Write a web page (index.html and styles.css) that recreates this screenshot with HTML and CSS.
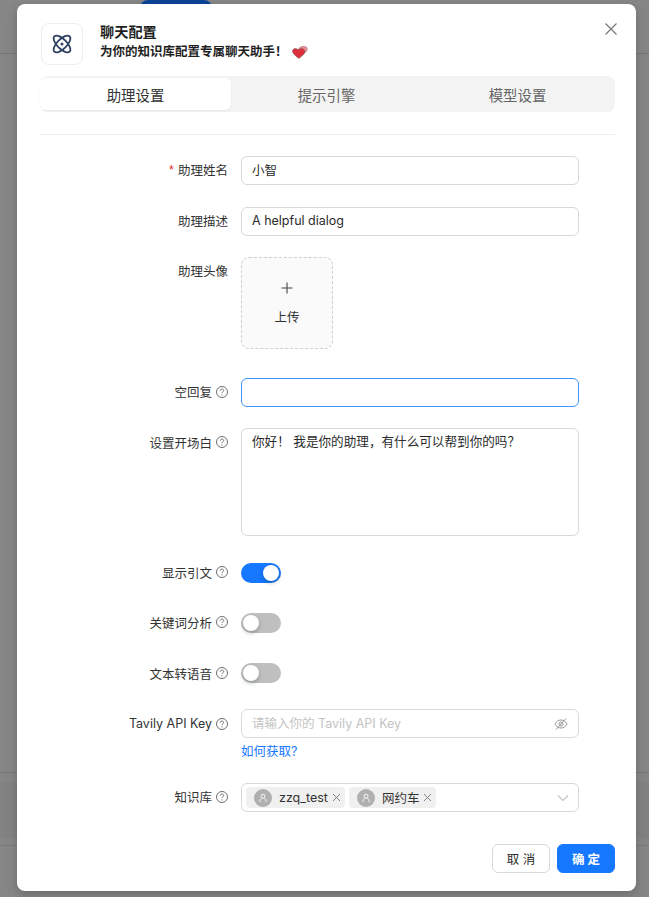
FILE: index.html
```html
<!DOCTYPE html>
<html lang="zh">
<head>
<meta charset="utf-8">
<title>聊天配置</title>
<link rel="stylesheet" href="styles.css">
</head>
<body>
<div class="backdrop">
  <div class="bg-pill"></div>
  <div class="bg-line bg-line-a"></div>
  <div class="bg-line bg-line-b"></div>
  <div class="bg-band"></div>
  <div class="bg-line bg-line-c"></div>
</div>
<main class="modal">
  <button class="close" aria-label="关闭">
    <svg width="14" height="14" viewBox="0 0 14 14"><path d="M1.5 1.5l11 11M12.5 1.5l-11 11" stroke="#777" stroke-width="1.2" fill="none"/></svg>
  </button>
  <header class="head">
    <div class="logo">
      <svg width="22" height="22" viewBox="0 0 22 22" fill="none" stroke="#2f4160" stroke-width="1.8">
        <ellipse cx="11" cy="11" rx="10.800" ry="4.800" transform="rotate(45 11 11)"/>
        <ellipse cx="11" cy="11" rx="10.800" ry="4.800" transform="rotate(-45 11 11)"/>
        <circle cx="11" cy="11" r="1.500" fill="#2f4160" stroke="none"/>
      </svg>
    </div>
    <div class="head-text">
      <div class="title">聊天配置</div>
      <div class="subtitle">为你的知识库配置专属聊天助手！
        <svg class="hearts" width="16" height="13" viewBox="0 0 16 13">
          <path d="M6.500 3C7.500 1 10 .2 12.800.4c2.300.2 3.100 2.300 2 4.300-.9 1.600-3 3.200-5.300 4.300z" fill="#ec8c96" stroke="#8a6a6e" stroke-width=".5"/>
          <path d="M5.600 3.300C4 2 1.300 2.300.6 4.400c-.6 2 1.500 4.600 6.300 8 2.800-2 5.600-4.300 5.900-6.600.3-2.400-2.600-3.900-4.600-2.900-1.100.5-1.500.9-2.600.4z" fill="#dd2f3c" stroke="#6d5557" stroke-width=".5"/>
        </svg>
      </div>
    </div>
  </header>

  <nav class="tabs">
    <div class="tab tab-active">助理设置</div>
    <div class="tab">提示引擎</div>
    <div class="tab">模型设置</div>
  </nav>
  <hr class="divider">

  <form class="form">
    <div class="row row-name">
      <label class="label"><span class="req">*</span>助理姓名</label>
      <div class="field"><div class="input">小智</div></div>
    </div>
    <div class="row row-desc">
      <label class="label">助理描述</label>
      <div class="field"><div class="input">A helpful dialog</div></div>
    </div>
    <div class="row row-avatar">
      <label class="label">助理头像</label>
      <div class="field">
        <div class="upload">
          <svg width="12" height="12" viewBox="0 0 12 12"><path d="M6 .5v11M.5 6h11" stroke="#444" stroke-width="1.100" fill="none"/></svg>
          <span class="upload-text">上传</span>
        </div>
      </div>
    </div>
    <div class="row row-empty">
      <label class="label">空回复<svg class="help" viewBox="0 0 12 12"><use href="#q"/></svg></label>
      <div class="field"><div class="input input-focus"></div></div>
    </div>
    <div class="row row-open">
      <label class="label">设置开场白<svg class="help" viewBox="0 0 12 12"><use href="#q"/></svg></label>
      <div class="field"><div class="textarea">你好！ 我是你的助理，有什么可以帮到你的吗？</div></div>
    </div>
    <div class="row row-switch row-quote">
      <label class="label">显示引文<svg class="help" viewBox="0 0 12 12"><use href="#q"/></svg></label>
      <div class="field"><div class="switch switch-on"><span class="thumb"></span></div></div>
    </div>
    <div class="row row-switch row-keyword">
      <label class="label">关键词分析<svg class="help" viewBox="0 0 12 12"><use href="#q"/></svg></label>
      <div class="field"><div class="switch"><span class="thumb"></span></div></div>
    </div>
    <div class="row row-switch row-tts">
      <label class="label">文本转语音<svg class="help" viewBox="0 0 12 12"><use href="#q"/></svg></label>
      <div class="field"><div class="switch"><span class="thumb"></span></div></div>
    </div>
    <div class="row row-key">
      <label class="label">Tavily API Key<svg class="help" viewBox="0 0 12 12"><use href="#q"/></svg></label>
      <div class="field">
        <div class="input input-icon">
          <span class="placeholder">请输入你的 Tavily API Key</span>
          <svg width="14" height="14" viewBox="0 0 14 14" fill="none" stroke="#999" stroke-width="1">
            <path d="M1 7c1.500-2.700 3.500-4 6-4s4.500 1.300 6 4c-1.500 2.700-3.500 4-6 4s-4.500-1.300-6-4z"/>
            <circle cx="7" cy="7" r="2"/>
            <path d="M12 1.500L2 12.500"/>
          </svg>
        </div>
        <a class="link" href="#">如何获取?</a>
      </div>
    </div>
    <div class="row row-kb">
      <label class="label">知识库<svg class="help" viewBox="0 0 12 12"><use href="#q"/></svg></label>
      <div class="field">
        <div class="select">
          <span class="tag">
            <span class="avatar"><svg width="10" height="10" viewBox="0 0 10 10"><use href="#u"/></svg></span>
            <span class="tag-text">zzq_test</span>
            <svg class="tag-x" viewBox="0 0 9 9"><use href="#x"/></svg>
          </span>
          <span class="tag">
            <span class="avatar"><svg width="10" height="10" viewBox="0 0 10 10"><use href="#u"/></svg></span>
            <span class="tag-text">网约车</span>
            <svg class="tag-x" viewBox="0 0 9 9"><use href="#x"/></svg>
          </span>
          <svg class="chevron" width="12" height="12" viewBox="0 0 12 12"><path d="M1 3.500l5 5 5-5" stroke="#c4c4c4" stroke-width="1.100" fill="none"/></svg>
        </div>
      </div>
    </div>
  </form>

  <footer class="foot">
    <button class="btn" type="button">取 消</button>
    <button class="btn btn-primary" type="button">确 定</button>
  </footer>
</main>

<svg class="defs" width="0" height="0">
  <defs>
    <g id="q" fill="none" stroke="#6f6f6f">
      <circle cx="6" cy="6" r="5.500" stroke-width="1"/>
      <path d="M4.300 4.700c0-1 .8-1.600 1.700-1.600s1.700.6 1.700 1.500c0 1.300-1.700 1.200-1.700 2.500" stroke-width="1"/>
      <circle cx="6" cy="8.800" r=".65" fill="#6f6f6f" stroke="none"/>
    </g>
    <g id="u" fill="none" stroke="#fff" stroke-width=".9">
      <circle cx="5" cy="3.300" r="2"/>
      <path d="M2 9V7.500C2 6.500 3 6 3.700 5.500M8 9V7.500C8 6.500 7 6 6.300 5.500"/>
    </g>
    <path id="x" d="M1 1l7 7M8 1L1 8" stroke="#777" stroke-width=".9" fill="none"/>
  </defs>
</svg>
</body>
</html>
```
FILE: styles.css
```css
* { box-sizing: border-box; }
html, body { margin: 0; padding: 0; height: 100%; }
body {
  background: #868686;
  font-family: Inter, "Noto Sans CJK SC", sans-serif;
  font-size: 12.5px;
  color: #2b2b2b;
  overflow: hidden;
}
.backdrop { position: absolute; inset: 0; overflow: hidden; }
.bg-pill { position: absolute; left: 140px; top: 0; width: 72px; height: 20px; background: #0e4496; border-radius: 8px 8px 0 0; }
.bg-line { position: absolute; left: 0; right: 0; height: 1px; background: #767676; }
.bg-line-a { top: 53px; }
.bg-line-b { top: 772px; }
.bg-line-c { top: 845px; background: #7a7a7a; }
.bg-band { position: absolute; left: 0; right: 0; top: 782px; height: 56px; background: #828282; }

.modal {
  position: absolute;
  left: 17px;
  top: 4px;
  width: 619px;
  height: 887px;
  background: #fff;
  border-radius: 8px;
  padding: 19px 21px 18px 23px;
  display: flex;
  flex-direction: column;
  box-shadow: 0 6px 16px rgba(0,0,0,.08), 0 3px 6px rgba(0,0,0,.12);
}
.close { position: absolute; right: 18px; top: 18px; width: 14px; height: 14px; padding: 0; border: 0; background: none; display: flex; }

.head { display: flex; align-items: center; height: 42px; padding-left: 1px; gap: 17px; }
.logo { width: 42px; height: 42px; border: 1px solid #eceef2; border-radius: 8px; display: flex; align-items: center; justify-content: center; }
.head-text { display: flex; flex-direction: column; margin-top: -4px; }
.title { font-size: 14.2px; font-weight: 700; line-height: 20px; color: #1f1f1f; }
.subtitle { font-size: 12.5px; font-weight: 600; line-height: 20px; color: #1f1f1f; display: flex; align-items: center; }
.hearts { margin-left: 4px; margin-top: 1px; }

.tabs { display: flex; margin-top: 11px; height: 36px; padding: 2px 2px 2px 0; background: #f3f3f3; border-radius: 8px; }
.tab { flex: 1; display: flex; align-items: center; justify-content: center; font-size: 14.4px; color: #666; border-radius: 6px; }
.tab-active { background: #fff; color: #333; box-shadow: 0 1px 2px rgba(0,0,0,.05); }
.divider { margin: 22px 0 0; border: 0; border-top: 1px solid #ededed; }

.form { display: flex; flex-direction: column; margin-top: 21px; }
.row { display: flex; gap: 13px; }
.label { width: 188px; flex: none; height: 29px; padding-bottom: 2px; display: flex; align-items: center; justify-content: flex-end; font-size: 12.5px; color: #333; white-space: nowrap; }
.req { color: #e0282e; margin-right: 4px; font-family: "Liberation Sans", sans-serif; }
.help { width: 12px; height: 12px; margin-left: 4px; flex: none; }
.field { width: 338px; flex: none; }
.row-desc { margin-top: 22px; }
.row-avatar { margin-top: 21px; }
.row-empty { margin-top: 29px; }
.row-open { margin-top: 21px; }
.row-quote { margin-top: 27px; }
.row-keyword { margin-top: 30px; }
.row-tts { margin-top: 30px; }
.row-key { margin-top: 26px; }
.row-kb { margin-top: 22px; }
.row-avatar .label { height: 29px; }
.row-open .label { height: 30px; }
.row-switch .label, .row-switch .field { height: 20px; }
.row-tts .label { padding-bottom: 0; }
.row-key .label { height: 31px; }

.input { height: 29px; border: 1px solid #d9d9d9; border-radius: 6px; padding: 0 10px 2px; display: flex; align-items: center; font-size: 12.5px; color: #2b2b2b; background: #fff; }
.input-focus { border-color: #4096ff; }
.input-icon { justify-content: space-between; padding-right: 10px; }
.input-icon svg { margin-top: 2px; }
.placeholder { color: #c4c4c4; }
.textarea { height: 108px; border: 1px solid #d9d9d9; border-radius: 6px; padding: 4px 10px; font-size: 12.6px; line-height: 18px; }
.upload { width: 92px; height: 92px; background: #fafafa; border: 1px dashed #d0d0d0; border-radius: 8px; display: flex; flex-direction: column; align-items: center; padding-top: 24px; }
.upload-text { margin-top: 15px; font-size: 12.5px; color: #333; line-height: 18px; }

.switch { width: 40px; height: 20px; border-radius: 10px; background: #bfbfbf; padding: 2px; display: flex; }
.switch-on { background: #1677ff; justify-content: flex-end; }
.thumb { width: 16px; height: 16px; border-radius: 50%; background: #fff; box-shadow: 0 2px 4px rgba(0,35,11,.25); }

.link { display: block; margin-top: 5px; font-size: 12.5px; line-height: 18px; color: #1677ff; text-decoration: none; }

.select { height: 29px; border: 1px solid #d9d9d9; border-radius: 6px; padding: 0 4px; display: flex; align-items: center; gap: 4px; position: relative; }
.tag { height: 21px; background: #f0f0f0; border-radius: 4px; display: inline-flex; align-items: center; padding: 0 4px 0 8px; font-size: 12.5px; color: #333; }
.avatar { width: 18px; height: 18px; border-radius: 50%; background: #b0b0b0; display: flex; align-items: center; justify-content: center; }
.tag-text { margin-left: 7px; }
.tag-x { width: 9px; height: 9px; margin-left: 4px; }
.chevron { position: absolute; right: 9px; top: 8px; }

.foot { margin-top: auto; display: flex; justify-content: flex-end; gap: 7px; }
.btn { width: 58px; height: 29px; border: 1px solid #d9d9d9; border-radius: 6px; background: #fff; font: 400 12.5px Inter, "Noto Sans CJK SC", sans-serif; color: #2b2b2b; padding: 0; }
.btn-primary { background: #1677ff; border-color: #1677ff; color: #fff; font-weight: 600; }
.defs { position: absolute; }
```
